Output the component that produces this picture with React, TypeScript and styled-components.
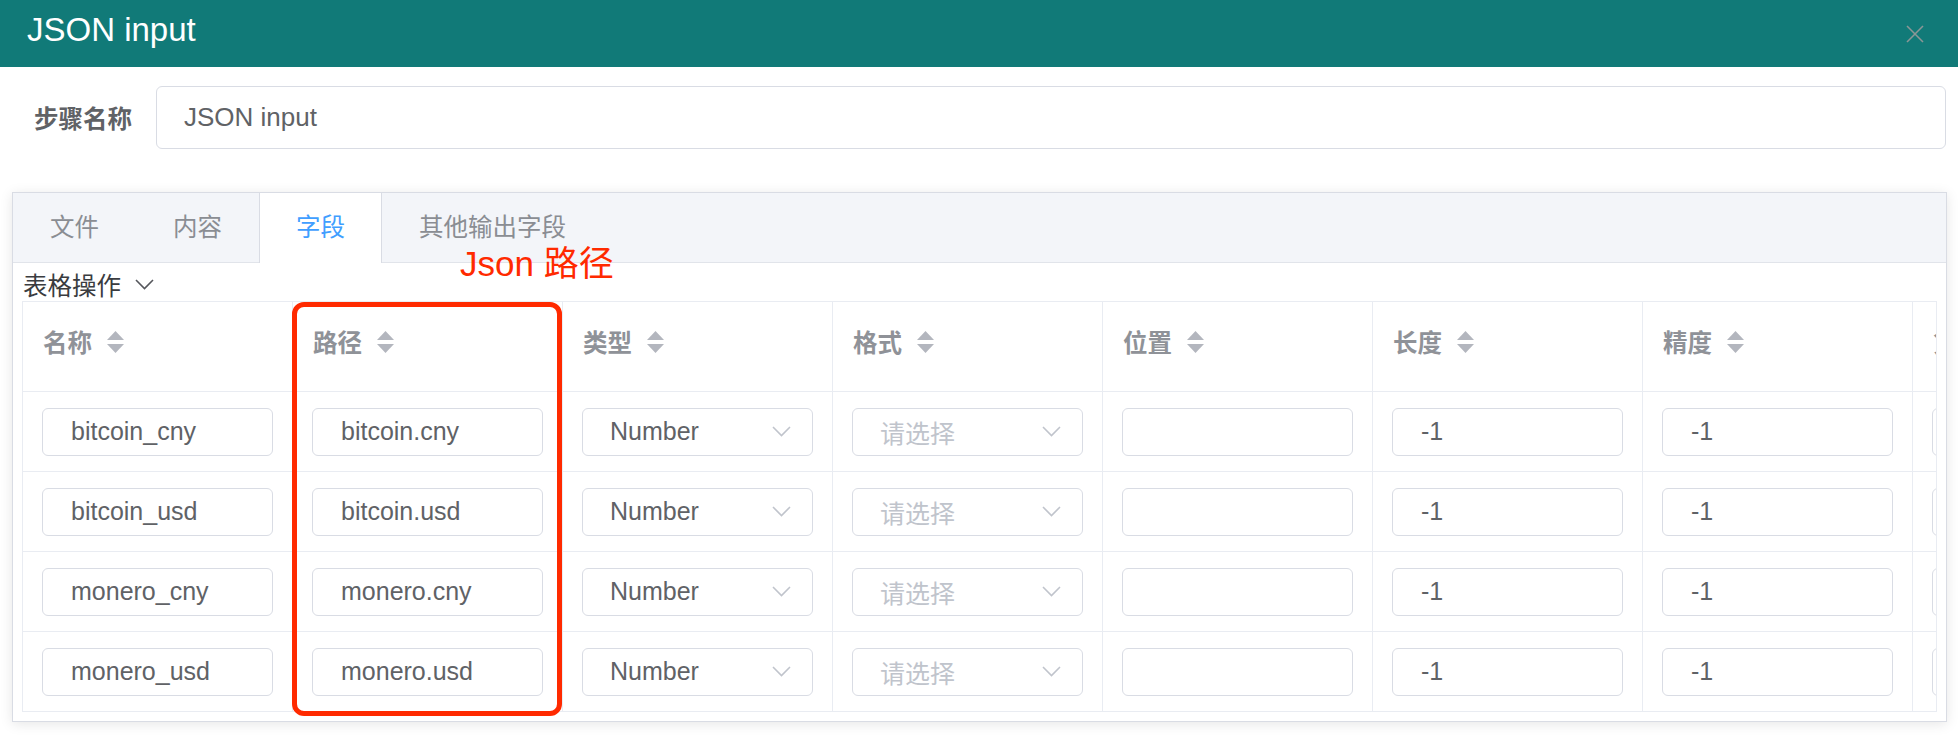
import React from 'react';
import styled, { createGlobalStyle } from 'styled-components';

const colors = {
  teal: '#117a78',
  border: '#d9dce4',
  cellBorder: '#e9ecf2',
  text: '#606266',
  dark: '#3a3c40',
  header: '#8f9298',
  muted: '#c0c4cc',
  caret: '#b3b6be',
  blue: '#409eff',
  tabBg: '#f3f5f9',
  red: '#ff2a00',
};

const font = `'Liberation Sans', 'Noto Sans CJK SC', sans-serif`;

const GlobalStyle = createGlobalStyle`
  html, body {
    margin: 0;
    padding: 0;
    background: #ffffff;
  }
  body {
    font-family: ${font};
  }
  * {
    box-sizing: border-box;
  }
`;

const Dialog = styled.div`
  position: relative;
  width: 1958px;
  height: 736px;
  overflow: hidden;
  background: #ffffff;
`;

const TitleBar = styled.header`
  height: 67px;
  background-color: ${colors.teal};
  display: flex;
  align-items: center;
  justify-content: space-between;
  padding: 0 34px 0 27px;
`;

const Title = styled.h1`
  margin: 0 0 9px;
  font-size: 33px;
  font-weight: 400;
  line-height: 1;
  color: #ffffff;
`;

const CloseButton = styled.button`
  width: 18px;
  height: 18px;
  padding: 0;
  border: none;
  background: transparent;
  display: flex;
  cursor: pointer;
`;

const StepRow = styled.div`
  display: flex;
  align-items: center;
  padding: 19px 12px 0 34px;
`;

const StepLabel = styled.label`
  width: 122px;
  flex-shrink: 0;
  font-size: 24.5px;
  font-weight: 700;
  color: ${colors.text};
`;

const StepInput = styled.input`
  flex: 1;
  height: 63px;
  border: 1px solid ${colors.border};
  border-radius: 6px;
  padding: 0 27px;
  font-family: ${font};
  font-size: 26px;
  color: ${colors.text};
  outline: none;
`;

const Panel = styled.section`
  margin: 43px 11px 0 12px;
  border: 1px solid ${colors.border};
  background: #ffffff;
  box-shadow: 0 2px 12px rgba(0, 0, 0, 0.1);
`;

const TabBar = styled.div`
  display: flex;
  align-items: flex-start;
  height: 70px;
  background-color: ${colors.tabBg};
  border-bottom: 1px solid #e1e4ea;
`;

const Tab = styled.div<{ $active?: boolean }>`
  height: 70px;
  margin-bottom: -1px;
  padding: 0 36px;
  line-height: 69px;
  font-size: 24.5px;
  color: ${p => (p.$active ? colors.blue : '#8a8d93')};
  background-color: ${p => (p.$active ? '#ffffff' : 'transparent')};
  border-left: 1px solid ${p => (p.$active ? colors.border : 'transparent')};
  border-right: 1px solid ${p => (p.$active ? colors.border : 'transparent')};
  cursor: pointer;
`;

const TabContent = styled.div`
  padding: 0 9px 9px;
`;

const Toolbar = styled.div`
  height: 38px;
  padding: 4px 0 0 1px;
  display: flex;
  align-items: center;
  gap: 14px;
  font-size: 24.5px;
  color: ${colors.dark};
`;

const Table = styled.div`
  border: 1px solid ${colors.cellBorder};
  border-bottom: none;
  overflow: hidden;
`;

const Row = styled.div<{ $head?: boolean }>`
  display: grid;
  grid-template-columns: repeat(8, 270px);
  height: ${p => (p.$head ? 90 : 80)}px;
  border-bottom: 1px solid ${colors.cellBorder};
`;

const HeadCell = styled.div`
  display: flex;
  align-items: center;
  gap: 15px;
  padding: 0 0 10px 20px;
  border-right: 1px solid ${colors.cellBorder};
  font-size: 24.5px;
  font-weight: 700;
  color: ${colors.header};
  white-space: nowrap;
`;

const Cell = styled.div`
  display: flex;
  align-items: center;
  padding: 0 19px;
  border-right: 1px solid ${colors.cellBorder};
`;

const TextInput = styled.input`
  width: 100%;
  height: 48px;
  border: 1px solid ${colors.border};
  border-radius: 6px;
  padding: 0 28px;
  font-family: ${font};
  font-size: 25px;
  color: ${colors.text};
  background: #ffffff;
  outline: none;
`;

const Select = styled.div<{ $empty?: boolean }>`
  width: 100%;
  height: 48px;
  border: 1px solid ${colors.border};
  border-radius: 6px;
  padding: 0 21px 0 27px;
  display: flex;
  align-items: center;
  justify-content: space-between;
  font-size: 25px;
  color: ${p => (p.$empty ? colors.muted : colors.text)};
  cursor: pointer;
`;

const Annotation = styled.div`
  position: absolute;
  left: 460px;
  top: 246px;
  font-size: 35px;
  line-height: 1;
  color: ${colors.red};
  white-space: nowrap;
`;

const Highlight = styled.div`
  position: absolute;
  left: 292px;
  top: 302px;
  width: 270px;
  height: 414px;
  border: 5px solid ${colors.red};
  border-radius: 12px;
  pointer-events: none;
`;

const SortCaret = () => (
  <svg width="17" height="22" viewBox="0 0 17 22">
    <polygon points="8.5,0 17,9 0,9" fill={colors.caret} />
    <polygon points="0,13 17,13 8.5,22" fill={colors.caret} />
  </svg>
);

const Chevron = ({ color = colors.muted }: { color?: string }) => (
  <svg width="19" height="11" viewBox="0 0 19 11" fill="none">
    <polyline points="1,1 9.5,9.5 18,1" stroke={color} strokeWidth="1.6" />
  </svg>
);

const columns = ['名称', '路径', '类型', '格式', '位置', '长度', '精度', '货币'];

const fields = [
  { name: 'bitcoin_cny', path: 'bitcoin.cny' },
  { name: 'bitcoin_usd', path: 'bitcoin.usd' },
  { name: 'monero_cny', path: 'monero.cny' },
  { name: 'monero_usd', path: 'monero.usd' },
];

const tabs = ['文件', '内容', '字段', '其他输出字段'];

export default function App() {
  return (
    <Dialog>
      <GlobalStyle />
      <TitleBar>
        <Title>JSON input</Title>
        <CloseButton aria-label="close">
          <svg width="18" height="18" viewBox="0 0 18 18" fill="none" stroke="#8b9796" strokeWidth="1.6">
            <line x1="1" y1="1" x2="17" y2="17" />
            <line x1="17" y1="1" x2="1" y2="17" />
          </svg>
        </CloseButton>
      </TitleBar>

      <StepRow>
        <StepLabel>步骤名称</StepLabel>
        <StepInput readOnly defaultValue="JSON input" />
      </StepRow>

      <Panel>
        <TabBar>
          {tabs.map(t => (
            <Tab key={t} $active={t === '字段'}>{t}</Tab>
          ))}
        </TabBar>
        <TabContent>
          <Toolbar>
            表格操作
            <Chevron color="#55575c" />
          </Toolbar>
          <Table>
            <Row $head>
              {columns.map(c => (
                <HeadCell key={c}>
                  {c}
                  <SortCaret />
                </HeadCell>
              ))}
            </Row>
            {fields.map(f => (
              <Row key={f.name}>
                <Cell><TextInput readOnly defaultValue={f.name} /></Cell>
                <Cell><TextInput readOnly defaultValue={f.path} /></Cell>
                <Cell>
                  <Select>Number<Chevron /></Select>
                </Cell>
                <Cell>
                  <Select $empty>请选择<Chevron /></Select>
                </Cell>
                <Cell><TextInput readOnly defaultValue="" /></Cell>
                <Cell><TextInput readOnly defaultValue="-1" /></Cell>
                <Cell><TextInput readOnly defaultValue="-1" /></Cell>
                <Cell><TextInput readOnly defaultValue="" /></Cell>
              </Row>
            ))}
          </Table>
        </TabContent>
      </Panel>

      <Annotation>Json 路径</Annotation>
      <Highlight />
    </Dialog>
  );
}
